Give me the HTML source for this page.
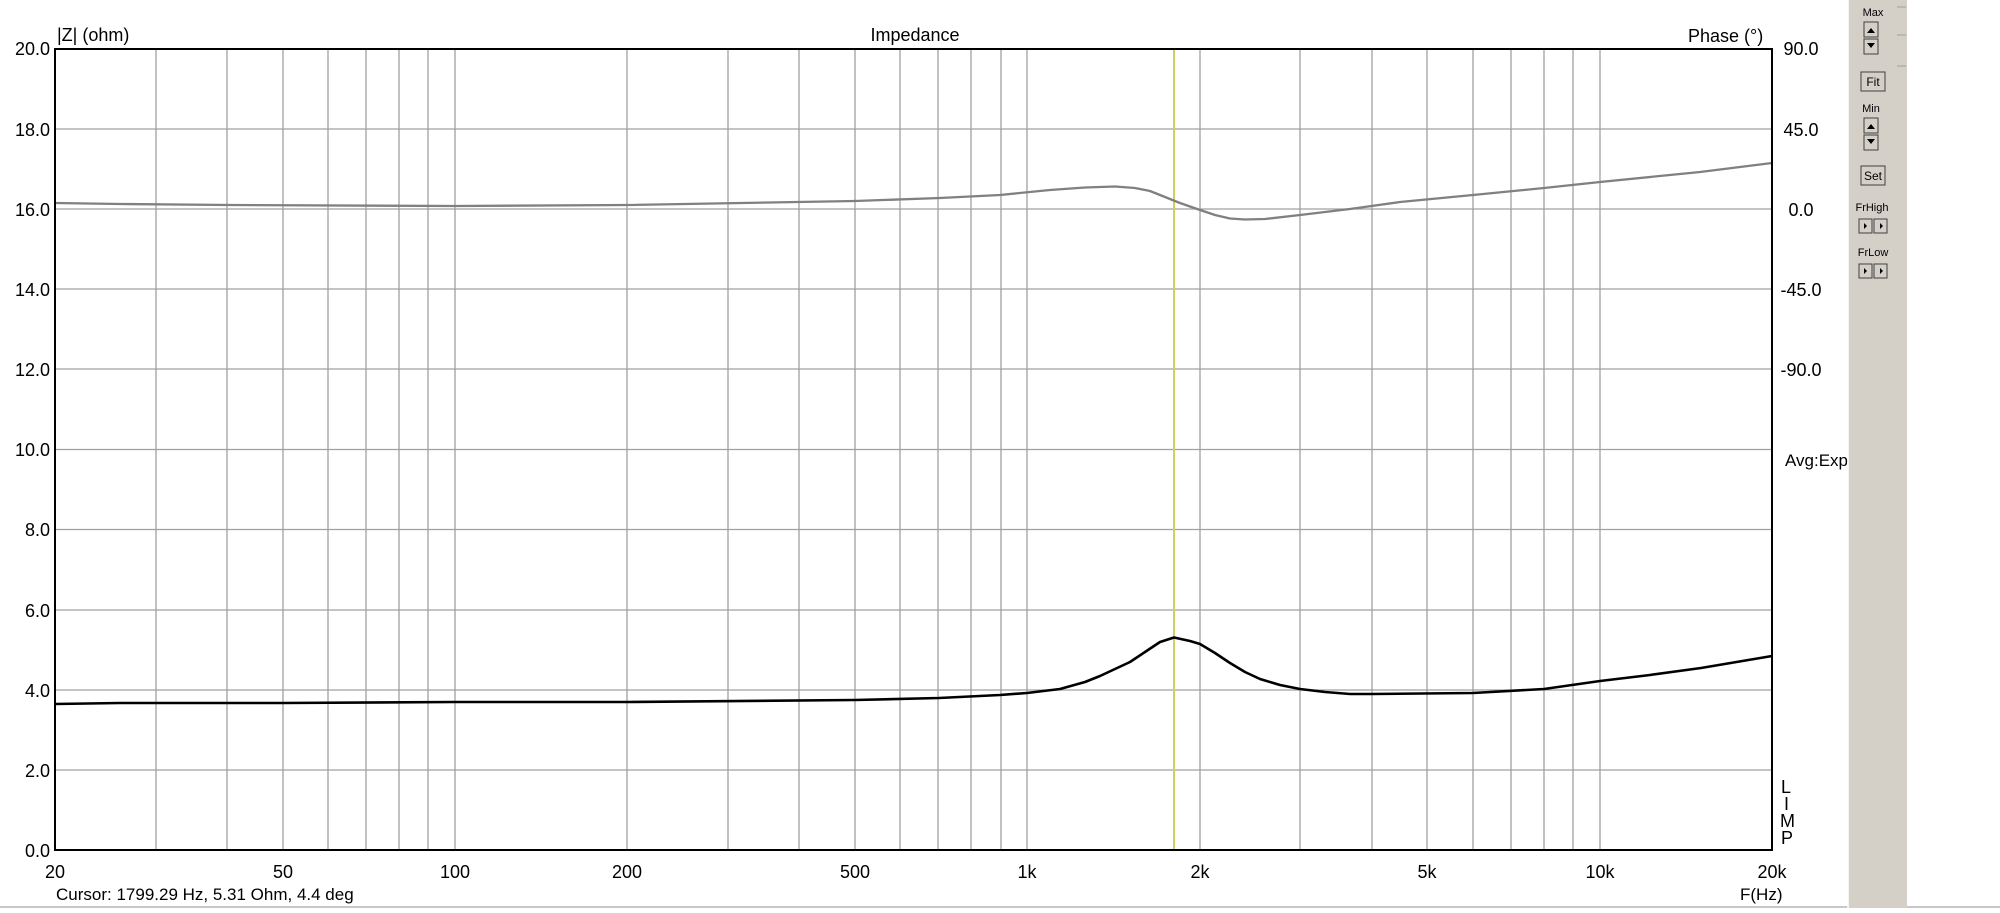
<!DOCTYPE html>
<html><head><meta charset="utf-8"><style>
body{margin:0;width:2000px;height:908px;overflow:hidden;background:#fff;font-family:"Liberation Sans",Arial,sans-serif}
.t{font-family:"Liberation Sans",Arial,sans-serif;fill:#000}
</style></head><body>
<svg width="2000" height="908" xmlns="http://www.w3.org/2000/svg">
<rect width="2000" height="908" fill="#fff"/>
<g stroke="#a0a0a0" stroke-width="1.3">
<line x1="55" x2="1772" y1="129" y2="129"/><line x1="55" x2="1772" y1="209" y2="209"/>
<line x1="55" x2="1772" y1="289" y2="289"/><line x1="55" x2="1772" y1="369" y2="369"/>
<line x1="55" x2="1772" y1="449.5" y2="449.5"/><line x1="55" x2="1772" y1="529.5" y2="529.5"/>
<line x1="55" x2="1772" y1="610" y2="610"/><line x1="55" x2="1772" y1="690" y2="690"/>
<line x1="55" x2="1772" y1="770" y2="770"/>
<line x1="156" x2="156" y1="49" y2="850"/><line x1="227" x2="227" y1="49" y2="850"/>
<line x1="283" x2="283" y1="49" y2="850"/><line x1="328" x2="328" y1="49" y2="850"/>
<line x1="366" x2="366" y1="49" y2="850"/><line x1="399" x2="399" y1="49" y2="850"/>
<line x1="428" x2="428" y1="49" y2="850"/><line x1="455" x2="455" y1="49" y2="850"/>
<line x1="627" x2="627" y1="49" y2="850"/><line x1="728" x2="728" y1="49" y2="850"/>
<line x1="799" x2="799" y1="49" y2="850"/><line x1="855" x2="855" y1="49" y2="850"/>
<line x1="900" x2="900" y1="49" y2="850"/><line x1="938" x2="938" y1="49" y2="850"/>
<line x1="971" x2="971" y1="49" y2="850"/><line x1="1001" x2="1001" y1="49" y2="850"/>
<line x1="1027" x2="1027" y1="49" y2="850"/><line x1="1200" x2="1200" y1="49" y2="850"/>
<line x1="1300" x2="1300" y1="49" y2="850"/><line x1="1372" x2="1372" y1="49" y2="850"/>
<line x1="1427" x2="1427" y1="49" y2="850"/><line x1="1473" x2="1473" y1="49" y2="850"/>
<line x1="1511" x2="1511" y1="49" y2="850"/><line x1="1544" x2="1544" y1="49" y2="850"/>
<line x1="1573" x2="1573" y1="49" y2="850"/><line x1="1600" x2="1600" y1="49" y2="850"/>
</g>
<line x1="1174" x2="1174" y1="49" y2="850" stroke="#d0d060" stroke-width="2"/>
<path d="M55,203 L120,204 L230,205 L455,206 L627,205 L855,201 L940,198 L1000,195 L1050,190 L1085,187.5 L1115,186.5 L1135,188 L1150,191 L1165,197 L1180,203 L1200,210 L1215,215 L1230,218.5 L1245,219.5 L1265,219 L1300,215 L1350,209 L1400,202 L1473,195 L1544,188 L1600,182 L1700,172 L1772,163" fill="none" stroke="#808080" stroke-width="2.3" stroke-linejoin="round"/>
<path d="M55,704 L120,703 L283,703 L455,702 L627,702 L855,700 L939,698 L1000,695 L1027,693 L1060,689 L1085,682 L1100,676 L1115,669 L1130,662 L1145,652 L1160,642 L1174,637.5 L1190,641 L1200,644 L1215,653 L1230,663 L1245,672 L1260,679 L1280,685 L1300,689 L1325,692 L1350,694 L1372,694 L1473,693 L1544,689 L1600,681 L1650,675 L1701,668 L1772,656" fill="none" stroke="#000" stroke-width="2.6" stroke-linejoin="round"/>
<rect x="55" y="49" width="1717" height="801" fill="none" stroke="#000" stroke-width="2"/>
<g class="t" font-size="18">
<text x="57" y="41">|Z| (ohm)</text>
<text x="915" y="41" text-anchor="middle">Impedance</text>
<text x="1688" y="42">Phase (°)</text>
<g text-anchor="end">
<text x="50" y="55">20.0</text><text x="50" y="136">18.0</text><text x="50" y="216">16.0</text>
<text x="50" y="296">14.0</text><text x="50" y="376">12.0</text><text x="50" y="456">10.0</text>
<text x="50" y="536">8.0</text><text x="50" y="617">6.0</text><text x="50" y="697">4.0</text>
<text x="50" y="777">2.0</text><text x="50" y="857">0.0</text>
</g>
<g text-anchor="middle">
<text x="1801" y="55">90.0</text><text x="1801" y="136">45.0</text><text x="1801" y="216">0.0</text>
<text x="1801" y="296">-45.0</text><text x="1801" y="376">-90.0</text>
<text x="55" y="878">20</text><text x="283" y="878">50</text><text x="455" y="878">100</text>
<text x="627" y="878">200</text><text x="855" y="878">500</text><text x="1027" y="878">1k</text>
<text x="1200" y="878">2k</text><text x="1427" y="878">5k</text><text x="1600" y="878">10k</text>
<text x="1772" y="878">20k</text>
</g>
<text x="1785" y="466" font-size="17">Avg:Exp</text>
<text x="1740" y="900" font-size="17">F(Hz)</text>
<text x="56" y="900" font-size="17">Cursor: 1799.29 Hz, 5.31 Ohm, 4.4 deg</text>
<text x="1781" y="793">L</text><text x="1784" y="810">I</text><text x="1780" y="827">M</text><text x="1781" y="844">P</text>
</g>
<line x1="0" x2="2000" y1="907" y2="907" stroke="#c8c8c8" stroke-width="2"/>
<rect x="1848" y="0" width="59" height="908" fill="#d4d0c8"/>
<line x1="1848" x2="1848" y1="0" y2="908" stroke="#fff" stroke-width="1.5"/>
<g stroke="#a0a0a0"><line x1="1897" x2="1906" y1="7" y2="7"/><line x1="1897" x2="1906" y1="35" y2="35"/><line x1="1897" x2="1906" y1="66" y2="66"/></g>
<g font-family="Liberation Sans,Arial,sans-serif" font-size="11" fill="#000" text-anchor="middle">
<text x="1873" y="16">Max</text><text x="1871" y="112">Min</text>
<text x="1872" y="211">FrHigh</text><text x="1873" y="256">FrLow</text>
</g>
<g fill="#d4d0c8" stroke="#404040" stroke-width="1">
<rect x="1864" y="22" width="14" height="15"/><rect x="1864" y="39" width="14" height="15"/>
<rect x="1861" y="72" width="24" height="19"/>
<rect x="1864" y="118" width="14" height="15"/><rect x="1864" y="135" width="14" height="15"/>
<rect x="1861" y="166" width="24" height="19"/>
<rect x="1859" y="219" width="13" height="14"/><rect x="1874" y="219" width="13" height="14"/>
<rect x="1859" y="264" width="13" height="14"/><rect x="1874" y="264" width="13" height="14"/>
</g>
<g fill="#000">
<path d="M1867,33 L1875,33 L1871,28Z"/><path d="M1867,43 L1875,43 L1871,48Z"/>
<path d="M1867,129 L1875,129 L1871,124Z"/><path d="M1867,139 L1875,139 L1871,144Z"/>
<path d="M1867,226 L1864,223 L1864,229Z"/><path d="M1880,223 L1883,226 L1880,229Z"/>
<path d="M1867,271 L1864,268 L1864,274Z"/><path d="M1880,268 L1883,271 L1880,274Z"/>
</g>
<g font-family="Liberation Sans,Arial,sans-serif" font-size="12" fill="#000" text-anchor="middle">
<text x="1873" y="86">Fit</text><text x="1873" y="180">Set</text>
</g>
</svg>
</body></html>
